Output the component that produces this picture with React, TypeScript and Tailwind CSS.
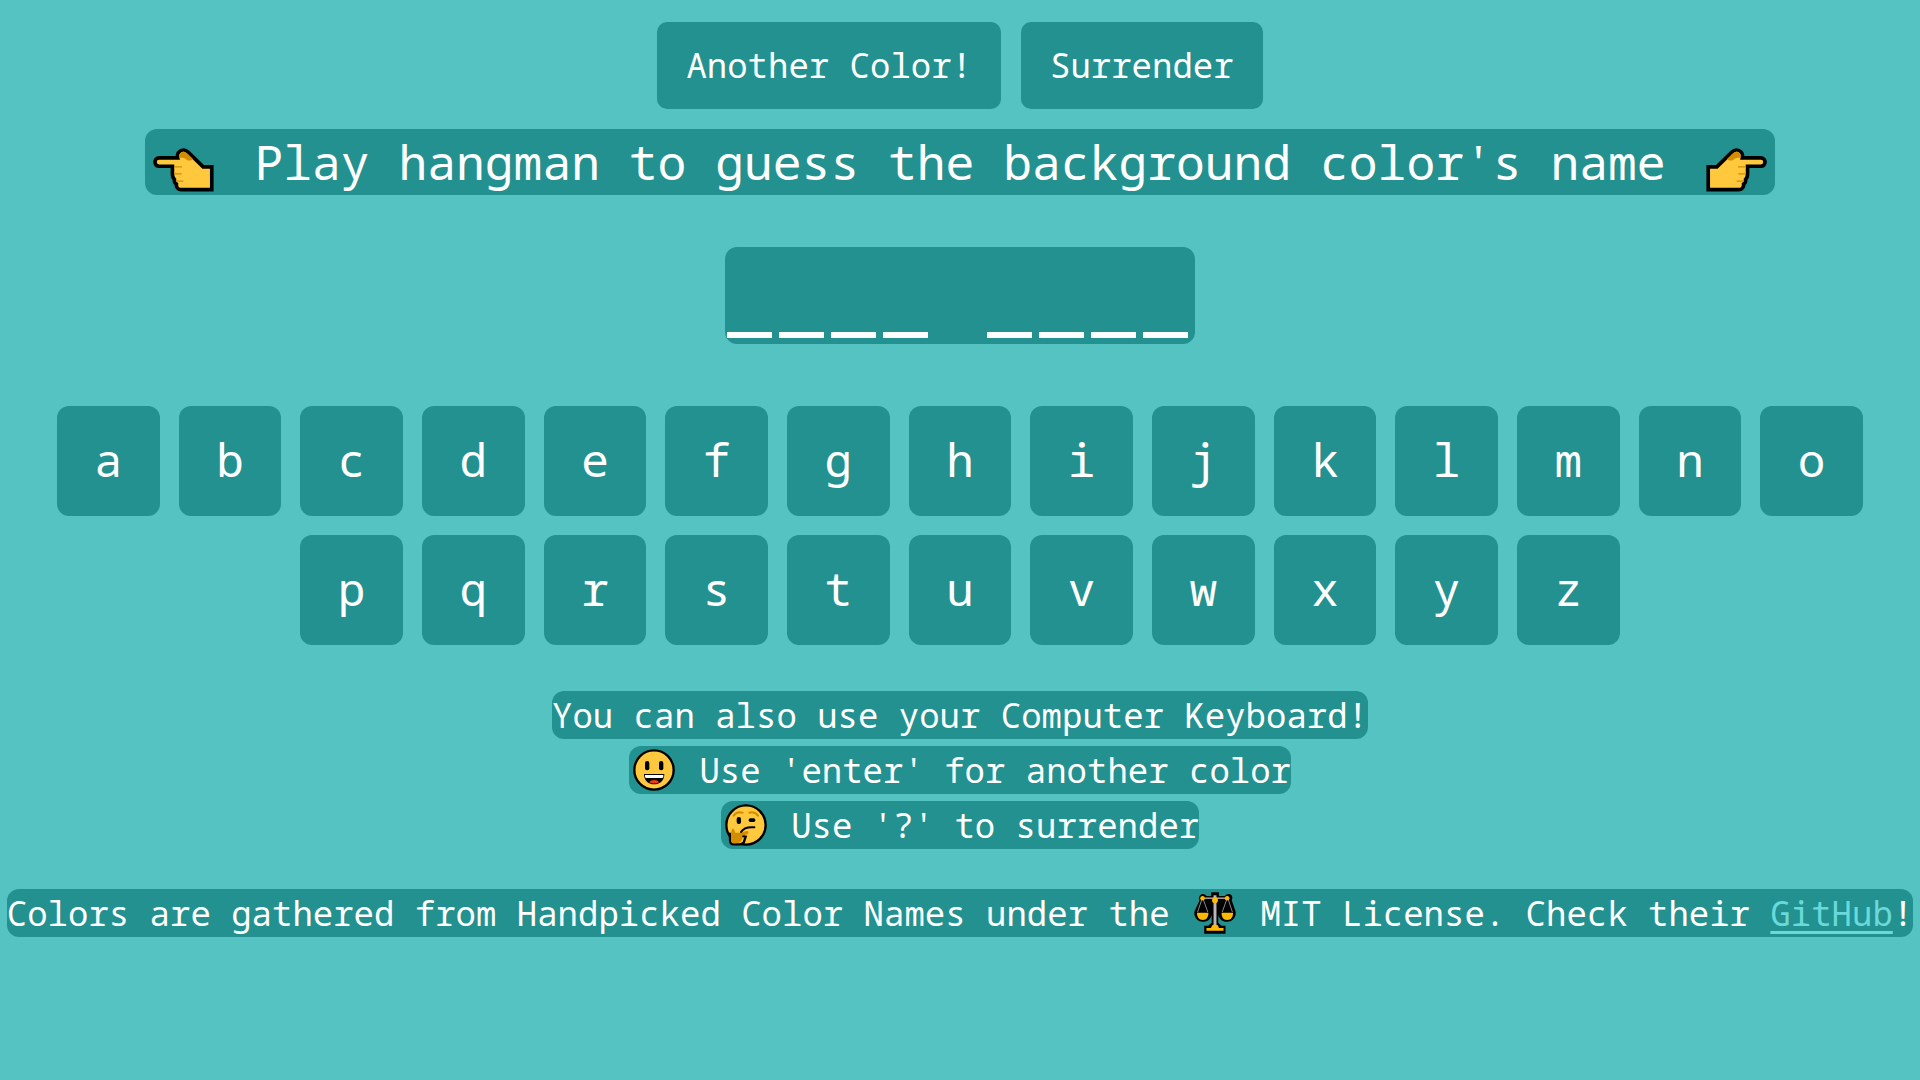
import type { ReactNode } from "react";

const FIRST_ROW = "abcdefghijklmno".split("");
const SECOND_ROW = "pqrstuvwxyz".split("");
const WORD = "____ ____".split("");

function HandIcon({ className = "" }: { className?: string }) {
  return (
    <svg viewBox="9 23 183 133" className={`mt-4 h-[44px] w-[61px] shrink-0 ${className}`} role="img" aria-label="Pointing hand">
      <path
        d="M27 53H83C80 38 89 29 101 29C107 29 111 32 116 37L160 80H186V149H94C84 149 78 142 79 132C74 129 72 124 73 118C68 114 67 109 67 101V78H27C10 78 10 53 27 53Z"
        fill="#ffc83d"
        stroke="#000"
        strokeWidth="11"
      />
      <path d="M88 52C85 41 92 34 101 34C106 34 110 37 114 41L129 56C125 61 117 63 111 59C105 54 99 52 88 52Z" fill="#d48c00" />
      <path d="M73 80H96M73 101H95M79 123H100" stroke="#d48c00" strokeWidth="4" />
    </svg>
  );
}

function GrinIcon() {
  return (
    <svg viewBox="13 12 126 126" className="h-[42px] w-[42px] shrink-0" role="img" aria-label="Grinning face">
      <circle cx="76" cy="75" r="59" fill="#ffc83d" stroke="#000" strokeWidth="7" />
      <rect x="49" y="48" width="13" height="28" rx="6" />
      <rect x="91" y="48" width="13" height="28" rx="6" />
      <path d="M46 87H107C107 106 95 118 76 118C58 118 46 106 46 87Z" />
      <path d="M49 90H104V96Q103 99 100 99H53Q50 99 49 96Z" fill="#fff" />
      <path d="M62 112C66 103 87 103 91 112C83 117 70 117 62 112Z" fill="#f03a17" />
    </svg>
  );
}

function ThinkIcon() {
  return (
    <svg viewBox="288 180 126 126" className="h-[42px] w-[42px] shrink-0" role="img" aria-label="Thinking face">
      <circle cx="351" cy="243" r="59" fill="#ffc83d" stroke="#000" strokeWidth="7" />
      <path d="M303 270V288C303 297 307 301 314 301H332C337 301 340 299 344 296L350 278Z" fill="#ffc83d" stroke="#000" strokeWidth="7" />
      <path d="M308 259C308 253 315 253 316 259L319 266H334L353 261C359 260 361 269 354 271L340 275C340 279 341 281 339 286C336 295 329 298 320 298H314C308 298 306 294 306 287V268Z" fill="#d48c00" />
      <path d="M314 215C320 206 330 203 341 206M361 206C372 203 381 207 387 215" fill="none" stroke="#d48c00" strokeWidth="6" strokeLinecap="round" />
      <rect x="323" y="219" width="13" height="21" rx="6" />
      <rect x="359" y="223" width="20" height="11" rx="5" />
      <path d="M336 264C345 250 357 248 376 250" fill="none" stroke="#000" strokeWidth="6" strokeLinecap="round" />
    </svg>
  );
}

function ScalesIcon() {
  return (
    <svg viewBox="128 62 128 128" className="h-[42px] w-[42px] shrink-0" role="img" aria-label="Balance scale">
      <path d="M180 63H204V74H222C226 67 238 65 243 73C246 78 245 83 243 87L255 122V130C252 144 244 152 229 153C214 153 205 144 202 132V156L212 165H224V189H159V165H171L182 156V132C179 144 170 153 155 153C140 152 132 144 129 130V122L145 87C143 83 143 78 146 73C151 65 162 67 166 74H180Z" />
      <path d="M152 84L139 123M156 84L170 123M228 84L214 123M232 84L245 123" stroke="#8a8a8a" strokeWidth="3" />
      <path d="M154 81H230" stroke="#9b9b9b" strokeWidth="5" />
      <path d="M192 72V165" stroke="#b8b8b8" strokeWidth="9" />
      <path d="M137 125H172C172 139 166 147 155 147C144 147 137 139 137 125ZM212 125H247C247 139 241 147 229 147C218 147 212 139 212 125Z" fill="#ffb900" />
      <path d="M180 172C181 164 186 161 192 161C198 161 203 164 204 172H218V180H166V172Z" fill="#ffb900" />
      <circle cx="154" cy="81" r="7" fill="#ffb900" />
      <circle cx="229" cy="81" r="7" fill="#ffb900" />
      <circle cx="192" cy="87" r="9" fill="#ffb900" />
    </svg>
  );
}

function ActionButton({ children }: { children: ReactNode }) {
  return (
    <button type="button" className="rounded-[10px] bg-[#23918f] px-[29px] py-[20px] leading-[47px]">
      {children}
    </button>
  );
}

function LetterKey({ letter, className = "" }: { letter: string; className?: string }) {
  return (
    <button type="button" className={`h-[110px] rounded-xl bg-[#23918f] pb-1 text-[46px] leading-none ${className}`}>
      {letter}
    </button>
  );
}

function Note({ children }: { children: ReactNode }) {
  return (
    <p className="flex h-[48px] items-center whitespace-pre rounded-xl bg-[#23918f] leading-[48px]">{children}</p>
  );
}

export default function App() {
  return (
    <main className="flex min-h-screen flex-col items-center bg-[#55c3c2] pt-[22px] font-['Noto_Sans_Mono','Liberation_Mono',monospace] text-[34px] text-white">
      <div className="flex gap-5">
        <ActionButton>Another Color!</ActionButton>
        <ActionButton>Surrender</ActionButton>
      </div>

      <h1 className="mt-5 flex h-[66px] items-center gap-3 whitespace-pre rounded-xl bg-[#23918f] px-2 text-[48px] leading-[66px]">
        <HandIcon />
        <span> Play hangman to guess the background color's name </span>
        <HandIcon className="-scale-x-100" />
      </h1>

      <div className="mt-[52px] flex h-[97px] gap-[7px] rounded-xl bg-[#23918f] pl-[2px] pr-[7px] text-[75px] leading-[101px]">
        {WORD.map((slot, i) => (
          <span key={i} className="whitespace-pre">
            {slot}
          </span>
        ))}
      </div>

      <div className="mt-[62px] grid w-full grid-cols-15 gap-[19px] px-[57px]">
        {FIRST_ROW.map((letter) => (
          <LetterKey key={letter} letter={letter} />
        ))}
        {SECOND_ROW.map((letter, i) => (
          <LetterKey key={letter} letter={letter} className={i === 0 ? "col-start-3" : ""} />
        ))}
      </div>

      <div className="mt-[46px] flex flex-col items-center gap-[7px]">
        <Note>You can also use your Computer Keyboard!</Note>
        <Note>
          <span className="px-1">
            <GrinIcon />
          </span>
          {" Use 'enter' for another color"}
        </Note>
        <Note>
          <span className="px-1">
            <ThinkIcon />
          </span>
          {" Use '?' to surrender"}
        </Note>
      </div>

      <footer className="mt-10">
        <Note>
          {"Colors are gathered from Handpicked Color Names under the "}
          <span className="px-1">
            <ScalesIcon />
          </span>
          {" MIT License. Check their "}
          <a href="https://github.com/meodai/color-names" className="text-[#69d9d9] underline decoration-[3px] underline-offset-[5px]">
            GitHub
          </a>
          !
        </Note>
      </footer>
    </main>
  );
}
